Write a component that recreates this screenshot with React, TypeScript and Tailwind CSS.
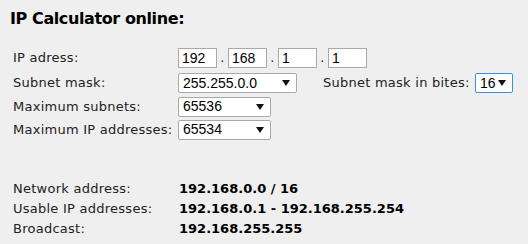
import React from "react";

const Caret = () => (
  <svg width="8" height="6" viewBox="0 0 8 6" className="shrink-0">
    <path d="M0 0 L8 0 L4 6 Z" fill="#111" />
  </svg>
);

const Sel = ({ value, w, blue }: { value: string; w: string; blue?: boolean }) => (
  <div
    className={`${w} h-[20px] bg-white border ${blue ? "border-[#3b8de0]" : "border-[#a9a9a9]"} rounded-[2px] flex items-center justify-between pl-[4px] pr-[6px] text-[14px] text-black tracking-normal`}
    style={{ fontFamily: '"Liberation Sans", Arial, sans-serif' }}
  >
    <span>{value}</span>
    <Caret />
  </div>
);

const Oct = ({ v }: { v: string }) => (
  <div
    className="w-[39px] h-[20px] bg-white border border-[#a9a9a9] flex items-center pl-[3px] text-[14px] text-black tracking-normal"
    style={{ fontFamily: '"Liberation Sans", Arial, sans-serif' }}
  >
    {v}
  </div>
);

export default function App() {
  return (
    <div
      className="w-[528px] h-[244px] bg-[#efefef] text-[#222] overflow-hidden"
      style={{ fontFamily: 'Verdana, "DejaVu Sans", sans-serif' }}
    >
      <div className="pl-[10px] pt-[9px] text-[16px] font-bold text-black leading-[20px] tracking-[-0.4px]">IP Calculator online:</div>
      <div className="pl-[13px] pt-[19px] text-[13px] tracking-[0.25px]">
        <div className="flex items-center h-[20px]">
          <div className="w-[165px]">IP adress:</div>
          <Oct v="192" />
          <span className="w-[11px] text-center">.</span>
          <Oct v="168" />
          <span className="w-[11px] text-center">.</span>
          <Oct v="1" />
          <span className="w-[11px] text-center">.</span>
          <Oct v="1" />
        </div>
        <div className="flex items-center h-[20px] mt-[5px]">
          <div className="w-[165px]">Subnet mask:</div>
          <Sel value="255.255.0.0" w="w-[119px]" />
          <div className="ml-[26px] w-[152px]">Subnet mask in bites:</div>
          <Sel value="16" w="w-[38px]" blue />
        </div>
        <div className="flex items-center h-[19px] mt-[4px]">
          <div className="w-[165px]">Maximum subnets:</div>
          <Sel value="65536" w="w-[93px]" />
        </div>
        <div className="flex items-center h-[19px] mt-[4px]">
          <div className="w-[165px]">Maximum IP addresses:</div>
          <Sel value="65534" w="w-[93px]" />
        </div>
        <div className="mt-[40px] leading-[20px]">
          <div className="flex">
            <div className="w-[166px]">Network address:</div>
            <div className="font-bold text-black tracking-normal">192.168.0.0 / 16</div>
          </div>
          <div className="flex">
            <div className="w-[166px]">Usable IP addresses:</div>
            <div className="font-bold text-black tracking-normal">192.168.0.1 - 192.168.255.254</div>
          </div>
          <div className="flex">
            <div className="w-[166px]">Broadcast:</div>
            <div className="font-bold text-black tracking-normal">192.168.255.255</div>
          </div>
        </div>
      </div>
    </div>
  );
}
